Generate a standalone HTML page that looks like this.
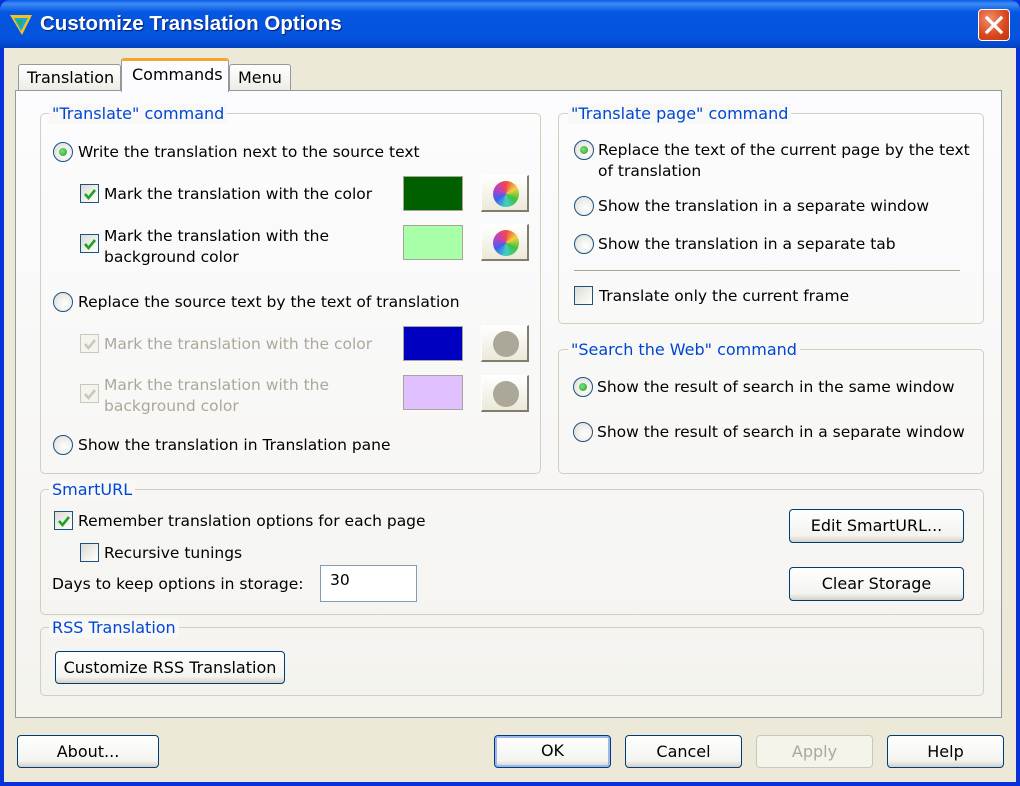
<!DOCTYPE html>
<html><head><meta charset="utf-8"><style>
*{box-sizing:border-box;margin:0;padding:0}
body{width:1020px;height:786px;overflow:hidden;background:#0831d9;font-family:"DejaVu Sans","Liberation Sans",sans-serif;font-size:15.5px;color:#000;position:relative}
.a{position:absolute}
#title{left:0;top:0;width:1020px;height:48px;background:linear-gradient(#0a5fe8 0%,#3d8bf5 8%,#0556e0 25%,#0453dd 80%,#0341c0 100%);border-radius:10px 10px 0 0}
#ttext{left:40px;top:12px;color:#fff;font-family:"Liberation Sans",sans-serif;font-weight:bold;font-size:20.5px;text-shadow:1px 1px 1px #0a1f70}
#close{left:978px;top:9px;width:32px;height:32px;border-radius:4px;border:1px solid #fff;background:radial-gradient(circle at 35% 30%,#f0906a,#d8461e 60%,#c13510);}
#body{left:4px;top:48px;width:1012px;height:734px;background:#ece9d8}
.tab{background:linear-gradient(#fff,#ecebe5);border:1px solid #919b9c;border-bottom:none;border-radius:3px 3px 0 0;font-size:16px;padding-left:8px;line-height:26px}
#panel{left:15px;top:90px;width:987px;height:628px;border:1px solid #919b9c;background:linear-gradient(#fcfcfe,#f4f3ee)}
.grp{border:1px solid #d0d0bf;border-radius:5px}
.lg{color:#0046d5;font-size:16px;background:#f8f8f6;padding:0 3px;line-height:20px;margin-top:1px}
.t{white-space:nowrap;line-height:21px;margin-top:1px}
.dis{color:#aca899}
.rad{width:20px;height:20px;border-radius:50%;border:1px solid #1c5180;background:radial-gradient(circle at 60% 60%,#fff,#dcdcd4)}
.rad.on::after{content:"";position:absolute;left:5px;top:5px;width:8px;height:8px;border-radius:50%;background:radial-gradient(circle at 40% 40%,#7fe07f,#21a121)}
.chk{width:19px;height:19px;border:1px solid #1c5180;background:linear-gradient(135deg,#dcdcd4,#fff)}
.chk.d{border-color:#cac8bb;background:#f4f3ee}
.chk svg{position:absolute;left:2px;top:2px}
.sw{width:60px;height:35px;border:1px solid #a8a698}
.cb{width:48px;height:37px;background:linear-gradient(#fff,#ece9d8);border:1px solid #fff;border-right:2px solid #7f7d70;border-bottom:2px solid #7f7d70}
.cb .w{position:absolute;left:11px;top:5px;width:26px;height:26px;border-radius:50%}
.btn{border:1px solid #003c74;border-radius:4px;background:linear-gradient(#fff,#f3f3ef 80%,#d6d0c5);text-align:center;font-size:16px}
.inp{border:1px solid #7f9db9;background:#fff}
</style></head><body>
<div id="title" class="a"></div>
<svg class="a" style="left:8px;top:11px" width="26" height="26" viewBox="0 0 26 26"><path d="M2 4 L24 4 L14 24 Z" fill="#f6c21a"/><path d="M6 7 L20 7 L13 20 Z" fill="#1aa6e0"/><path d="M9 9 L15 9 L12 16 Z" fill="#2bb34a"/></svg>
<div id="ttext" class="a">Customize Translation Options</div>
<div id="close" class="a"><svg width="30" height="30" viewBox="0 0 30 30"><path d="M8 8 L22 22 M22 8 L8 22" stroke="#fff" stroke-width="3.2" stroke-linecap="square"/></svg></div>
<div id="body" class="a"></div>

<div class="a tab" style="left:18px;top:64px;width:103px;height:27px">Translation</div>
<div class="a tab" style="left:229px;top:64px;width:62px;height:27px">Menu</div>
<div id="panel" class="a"></div>
<div class="a tab" style="left:121px;top:58px;width:108px;height:34px;background:#fcfcfe;border-top:3px solid #f5a430;line-height:28px;padding-left:10px">Commands</div>

<div class="a grp" style="left:40px;top:113px;width:501px;height:361px"></div>
<div class="a lg" style="left:49px;top:103px">"Translate" command</div>
<div class="a rad on" style="left:53px;top:142px"></div><div class="a t" style="left:78px;top:141px">Write the translation next to the source text</div>
<div class="a chk" style="left:80px;top:184px"><svg width="14" height="14"><path d="M2 7 L5.5 11 L12 3" stroke="#21a121" stroke-width="2.6" fill="none"/></svg></div><div class="a t" style="left:104px;top:183px">Mark the translation with the color</div>
<div class="a sw" style="left:403px;top:176px;background:#006000"></div>
<div class="a cb" style="left:481px;top:175px"><div class="w" style="background:conic-gradient(#f04848,#f0d040,#40c040,#40d0c0,#4060f0,#c040c0,#f04848)"></div></div>
<div class="a chk" style="left:80px;top:234px"><svg width="14" height="14"><path d="M2 7 L5.5 11 L12 3" stroke="#21a121" stroke-width="2.6" fill="none"/></svg></div><div class="a t" style="left:104px;top:225px">Mark the translation with the<br>background color</div>
<div class="a sw" style="left:403px;top:225px;background:#a8ffa8"></div>
<div class="a cb" style="left:481px;top:224px"><div class="w" style="background:conic-gradient(#f04848,#f0d040,#40c040,#40d0c0,#4060f0,#c040c0,#f04848)"></div></div>
<div class="a rad" style="left:53px;top:292px"></div><div class="a t" style="left:78px;top:291px">Replace the source text by the text of translation</div>
<div class="a chk d" style="left:80px;top:334px"><svg width="14" height="14"><path d="M2 7 L5.5 11 L12 3" stroke="#cac8bb" stroke-width="2.6" fill="none"/></svg></div><div class="a t dis" style="left:104px;top:333px">Mark the translation with the color</div>
<div class="a sw" style="left:403px;top:326px;background:#0000c0"></div>
<div class="a cb" style="left:481px;top:325px"><div class="w" style="background:#aca899"></div></div>
<div class="a chk d" style="left:80px;top:384px"><svg width="14" height="14"><path d="M2 7 L5.5 11 L12 3" stroke="#cac8bb" stroke-width="2.6" fill="none"/></svg></div><div class="a t dis" style="left:104px;top:374px">Mark the translation with the<br>background color</div>
<div class="a sw" style="left:403px;top:375px;background:#e0c0ff"></div>
<div class="a cb" style="left:481px;top:375px"><div class="w" style="background:#aca899"></div></div>
<div class="a rad" style="left:53px;top:435px"></div><div class="a t" style="left:78px;top:434px">Show the translation in Translation pane</div>

<div class="a grp" style="left:558px;top:113px;width:426px;height:211px"></div>
<div class="a lg" style="left:568px;top:103px">"Translate page" command</div>
<div class="a rad on" style="left:574px;top:140px"></div><div class="a t" style="left:598px;top:139px">Replace the text of the current page by the text<br>of translation</div>
<div class="a rad" style="left:574px;top:196px"></div><div class="a t" style="left:598px;top:195px">Show the translation in a separate window</div>
<div class="a rad" style="left:574px;top:234px"></div><div class="a t" style="left:598px;top:233px">Show the translation in a separate tab</div>
<div class="a" style="left:574px;top:270px;width:386px;height:1px;background:#aca899"></div>
<div class="a chk" style="left:574px;top:286px"></div><div class="a t" style="left:599px;top:285px">Translate only the current frame</div>

<div class="a grp" style="left:558px;top:349px;width:426px;height:125px"></div>
<div class="a lg" style="left:568px;top:339px">"Search the Web" command</div>
<div class="a rad on" style="left:573px;top:377px"></div><div class="a t" style="left:597px;top:376px">Show the result of search in the same window</div>
<div class="a rad" style="left:573px;top:422px"></div><div class="a t" style="left:597px;top:421px">Show the result of search in a separate window</div>

<div class="a grp" style="left:40px;top:489px;width:944px;height:126px"></div>
<div class="a lg" style="left:49px;top:479px">SmartURL</div>
<div class="a chk" style="left:54px;top:511px"><svg width="14" height="14"><path d="M2 7 L5.5 11 L12 3" stroke="#21a121" stroke-width="2.6" fill="none"/></svg></div><div class="a t" style="left:78px;top:510px">Remember translation options for each page</div>
<div class="a chk" style="left:80px;top:543px"></div><div class="a t" style="left:104px;top:542px">Recursive tunings</div>
<div class="a t" style="left:52px;top:573px">Days to keep options in storage:</div>
<div class="a inp" style="left:320px;top:565px;width:97px;height:37px"></div><div class="a t" style="left:330px;top:569px">30</div>
<div class="a btn" style="left:789px;top:509px;width:175px;height:34px;line-height:32px">Edit SmartURL...</div>
<div class="a btn" style="left:789px;top:567px;width:175px;height:34px;line-height:32px">Clear Storage</div>

<div class="a grp" style="left:40px;top:627px;width:944px;height:69px"></div>
<div class="a lg" style="left:49px;top:617px">RSS Translation</div>
<div class="a btn" style="left:55px;top:651px;width:230px;height:33px;line-height:31px">Customize RSS Translation</div>

<div class="a btn" style="left:17px;top:735px;width:142px;height:33px;line-height:31px">About...</div>
<div class="a btn" style="left:494px;top:735px;width:117px;height:33px;line-height:29px;box-shadow:inset 0 0 0 2px #9cb7f0">OK</div>
<div class="a btn" style="left:625px;top:735px;width:117px;height:33px;line-height:31px">Cancel</div>
<div class="a btn" style="left:756px;top:735px;width:117px;height:33px;line-height:31px;border-color:#cac8bb;background:#f5f4ea;color:#aca899">Apply</div>
<div class="a btn" style="left:887px;top:735px;width:117px;height:33px;line-height:31px">Help</div>
</body></html>
